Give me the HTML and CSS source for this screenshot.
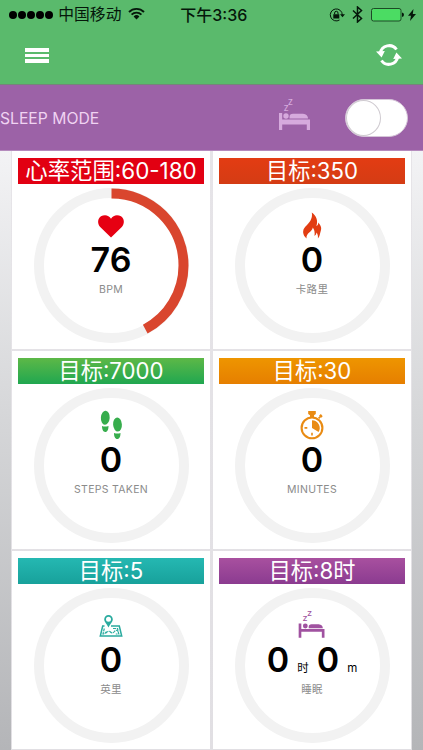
FILE: index.html
```html
<!DOCTYPE html>
<html lang="zh-CN">
<head>
<meta charset="utf-8">
<title>Activity</title>
<link rel="stylesheet" href="styles.css">
</head>
<body>
<header class="top">
  <div class="status">
    <div class="carrier">
      <span class="dots"><i></i><i></i><i></i><i></i><i></i></span>
      <span class="name">中国移动</span>
      <svg class="wifi" width="17" height="13" viewBox="0 0 17 13" fill="none" stroke="#05170a" stroke-width="1.900"><path d="M1 5a10.600 10.600 0 0 1 15 0M3.600 7.600a7 7 0 0 1 9.800 0"/><path d="M5.600 9.400a4.200 4.200 0 0 1 5.800 0L8.500 12.400z" fill="#05170a" stroke="none"/></svg>
    </div>
    <div class="clock">下午3:36</div>
    <div class="indicators">
      <svg width="16" height="14" viewBox="0 0 16 14"><path d="M13.300 7A6 6 0 1 0 10.500 12" fill="none" stroke="#05170a"/><path d="M11 6.300h5L13.500 9.300zM4.300 6.200h6v4.300h-6z" fill="#05170a"/><path d="M5.600 6.300V5a1.700 1.700 0 0 1 3.400 0v1.300" fill="none" stroke="#05170a"/></svg>
      <svg class="bt" width="11" height="17" viewBox="0 0 11 17" fill="none" stroke="#05170a" stroke-width="1.500"><path d="M1 4.500l8.500 8-4 3.500V1l4 3.500-8.500 8"/></svg>
      <svg class="battery" width="33" height="14" viewBox="0 0 33 14"><rect x=".5" y=".5" width="29.500" height="12.500" rx="2" fill="#4bdc63" stroke="#1c4a26"/><path d="M31 4.500q2 .5 2 2.300t-2 2.300z" fill="#05170a"/></svg>
      <svg class="bolt" width="8" height="12" viewBox="0 0 8 12"><path d="M5.500 0L0 6.700h3L2 12l6-7H4.800z" fill="#05170a"/></svg>
    </div>
  </div>
  <nav class="bar">
    <span class="menu"><i></i><i></i><i></i></span>
    <svg class="sync" width="26" height="22" viewBox="0 0 26 22"><g fill="none" stroke="#fff" stroke-width="3"><path d="M4.300 9A9 9 0 0 1 20.500 5.500"/><path d="M21.700 13A9 9 0 0 1 5.500 16.500"/></g><path d="M0 7.500l8.800-.5-3.200 6.500zM26 14.500l-8.800.5 3.200-6.500z" fill="#fff"/></svg>
  </nav>
</header>
<section class="mode">
  <span class="mode-label">SLEEP MODE</span>
  <svg class="mode-bed" width="32" height="32" viewBox="0 0 32 32"><text x="4.500" y="11.500" font-size="9.500">z</text><text x="8.700" y="6" font-size="9.500">z</text><path d="M0 14h3.200v6.500H31V31h-3.200v-5.500H3.200V31H0z"/><circle cx="7" cy="17" r="2.700"/><path d="M10.500 19.600v-1.600q0-3.200 3.500-3.200h10q5 .5 5 4.800z"/></svg>
  <span class="toggle"><i></i></span>
</section>
<main class="cards">
  <article class="card heart">
    <h2>心率范围:60-180</h2>
    <div class="dial">
      <svg class="ring" viewBox="0 0 155 155"><circle cx="77.500" cy="77.500" r="72.500"/><circle class="progress" cx="77.500" cy="77.500" r="72" pathLength="180" stroke-dasharray="76 180" transform="rotate(-90 77.500 77.500)"/></svg>
      <div class="reading">
        <svg class="icon" width="30" height="30" viewBox="0 0 30 30"><path d="M15 26.500L4.200 16C1.200 13 1.500 7.500 5 5.300 8.500 3.300 13 4 15 7.800 17 4 21.500 3.300 25 5.300c3.500 2.200 3.800 7.700.8 10.700z"/></svg>
        <div class="value">76</div>
        <div class="unit">BPM</div>
      </div>
    </div>
  </article>
  <article class="card flame">
    <h2>目标:350</h2>
    <div class="dial">
      <svg class="ring" viewBox="0 0 155 155"><circle cx="77.500" cy="77.500" r="72.500"/></svg>
      <div class="reading">
        <svg class="icon" width="30" height="30" viewBox="0 0 30 30"><path d="M9.500 27.500C5.500 24 5 19 8.500 15.500 12 12 16 8 14.800 1.500c4.500 3.500 6.500 8 4.600 13.500 1.300-.5 1.800-1.500 1.900-3.500 3.500 4 3.200 6.500 2.300 9-.8 2.300-.6 4.500-2.700 7 .3-2.500-.2-4.300-1.400-6-.3 1.800-.9 2.800-2 3.400.6-4-.2-6-1.700-8.400-.5 4.500-6.800 5-6.300 11z"/></svg>
        <div class="value">0</div>
        <div class="unit">卡路里</div>
      </div>
    </div>
  </article>
  <article class="card steps">
    <h2>目标:7000</h2>
    <div class="dial">
      <svg class="ring" viewBox="0 0 155 155"><circle cx="77.500" cy="77.500" r="72.500"/></svg>
      <div class="reading">
        <svg class="icon" width="30" height="30" viewBox="0 0 30 30"><ellipse cx="9.300" cy="6.700" rx="4.400" ry="7" transform="rotate(4 9.300 6.700)"/><path d="M6 15q3 1 6.500 0c0 3.500-1 6-3.200 6S6 18 6 15z"/><ellipse cx="21.500" cy="13.500" rx="4.400" ry="7" transform="rotate(-4 21.500 13.500)"/><path d="M18 22q3.500 1 6.500 0c0 3.500-1 6-3.200 6S18 25.500 18 22z"/></svg>
        <div class="value">0</div>
        <div class="unit">STEPS TAKEN</div>
      </div>
    </div>
  </article>
  <article class="card time">
    <h2>目标:30</h2>
    <div class="dial">
      <svg class="ring" viewBox="0 0 155 155"><circle cx="77.500" cy="77.500" r="72.500"/></svg>
      <div class="reading">
        <svg class="icon" width="30" height="30" viewBox="0 0 30 30"><g transform="translate(0 -.7)"><circle cx="15" cy="17.600" r="10.400" fill="none" stroke="currentColor" stroke-width="2.100"/><path d="M11.200.8h7.600v3L17 5v2.500h-4V5l-1.800-1.200zM15 17.800V10a7.800 7.800 0 0 1 6.600 11.800zM7.500 16.800h2.800v1.600H7.500zM14.200 22.500h1.600v2.600h-1.600zM21 7.500l1.600-1.600-.5-.8 1.800-1.300 1.800 2.200-1.500 1.500-.8-.3-1 1.500z"/></g></svg>
        <div class="value">0</div>
        <div class="unit">MINUTES</div>
      </div>
    </div>
  </article>
  <article class="card distance">
    <h2>目标:5</h2>
    <div class="dial">
      <svg class="ring" viewBox="0 0 155 155"><circle cx="77.500" cy="77.500" r="72.500"/></svg>
      <div class="reading">
        <svg class="icon" width="30" height="30" viewBox="0 0 30 30"><path d="M8.500 15H6.700L4.300 25h21.400l-2.400-10H15" fill="none" stroke="currentColor" stroke-width="1.500"/><path fill-rule="evenodd" d="M12.500 16.500C10.800 12.500 8.200 11 8.200 8.200a4.300 4.300 0 0 1 8.600 0c0 2.800-2.600 4.300-4.300 8.300zm0-10.800a2.500 2.500 0 1 0 0 5 2.500 2.500 0 0 0 0-5z"/><path d="M8.300 17.500L7 23h1.500l2-2.500M10 22q2.500-3 4.500-1t4-.5 3.500 0M17 17.500h4.500l1.300 5.500h-3" fill="none" stroke="currentColor" stroke-width="1.200" stroke-dasharray="3 .8"/></svg>
        <div class="value">0</div>
        <div class="unit">英里</div>
      </div>
    </div>
  </article>
  <article class="card sleep">
    <h2>目标:8时</h2>
    <div class="dial">
      <svg class="ring" viewBox="0 0 155 155"><circle cx="77.500" cy="77.500" r="72.500"/></svg>
      <div class="reading">
        <svg class="icon" width="30" height="30" viewBox="-2 -1 36 36"><text x="4.500" y="10.500" font-size="11">z</text><text x="10" y="5" font-size="11">z</text><path d="M0 14h3.200v6.500H31V31h-3.200v-7H3.200V31H0z"/><circle cx="8" cy="17" r="2.900"/><path d="M12 19.600v-1.600q0-3.200 3.500-3.200h8.500q5 .5 5 4.800z"/></svg>
        <div class="value duration"><span>0</span><small>时</small><span>0</span><small>m</small></div>
        <div class="unit">睡眠</div>
      </div>
    </div>
  </article>
</main>
</body>
</html>
```
FILE: styles.css
```css
* { box-sizing: border-box; }
body {
  margin: 0;
  height: 750px;
  overflow: hidden;
  font-family: Inter, "Noto Sans CJK SC", sans-serif;
  background: #fff;
}
.top {
  height: 85px;
  background: #5aba6c;
  border-bottom: 1px solid #75857a;
  color: #05170a;
}
.status {
  height: 28px;
  display: grid;
  grid-template-columns: 1fr auto 1fr;
  align-items: center;
  padding: 0 7px 0 8.500px;
}
.carrier, .indicators { display: flex; align-items: center; }
.dots { display: flex; gap: 1.200px; margin-right: 5px; }
.dots i { width: 8px; height: 8px; border-radius: 50%; background: #000; }
.name { font-size: 15.800px; line-height: 28px; padding-top: 1px; }
.wifi { margin-left: 7px; margin-top: -2px; }
.clock { font-size: 16px; font-weight: 500; line-height: 28px; padding-left: 3px; }
.indicators { justify-content: flex-end; }
.bt { margin: 0 8px 0 7px; }
.bolt { margin-left: 4px; }
.bar {
  height: 56px;
  display: flex;
  align-items: center;
  justify-content: space-between;
  padding: 0 21px 3px 25px;
}
.menu { display: grid; gap: 2px; width: 24px; margin-top: 2px; }
.menu i { height: 3.700px; background: #fff; }
.mode {
  height: 66px;
  display: flex;
  align-items: center;
  background: #9c62a7;
  border-bottom: 1px solid #b58bbd;
  padding-right: 15px;
}
.mode-label { flex: 1; font-size: 15.700px; color: #f0d3f2; padding-top: 1px; }
.mode-bed { color: #d6aadd; fill: currentColor; margin: -5px 34px 0 0; overflow: visible; }
.toggle {
  width: 63px;
  height: 38px;
  border-radius: 19px;
  background: #fff;
  border: 1px solid #d5c5d8;
}
.toggle i {
  display: block;
  width: 35px;
  height: 36px;
  border-radius: 50%;
  border: 1px solid #cfcad0;
}
.cards {
  height: 599px;
  overflow: hidden;
  display: grid;
  grid-template-columns: 198px 198px;
  grid-auto-rows: 198px;
  gap: 2px 3px;
  padding: 0 12px;
  background:
    linear-gradient(#e6e4e8, #e1dfe3) center / 401px 100% no-repeat,
    linear-gradient(#f3f3f5, #d5d6d8 45%, #b4b5b8);
}
.card {
  background: #fff;
  padding: 6.500px 6px 0;
}
h2 {
  margin: 0;
  height: 26.500px;
  font-size: 22.200px;
  line-height: 26px;
  font-weight: 400;
  text-align: center;
  color: #fff;
  white-space: nowrap;
}
.heart h2 { font-size: 22.400px; }
.dial { display: grid; width: 155px; height: 155px; margin: 4px 0 0 15.500px; }
.ring, .reading { grid-area: 1 / 1; }
.ring { width: 155px; height: 155px; fill: none; stroke: #f2f2f2; stroke-width: 10; }
.progress { stroke: #d9462e; }
.reading {
  display: flex;
  flex-direction: column;
  align-items: center;
  padding-top: 23px;
}
.icon { fill: currentColor; overflow: visible; }
.value {
  height: 38px;
  line-height: 38px;
  font-size: 34px;
  font-weight: 600;
  color: #000;
}
.unit {
  margin-top: 3px;
  font-size: 10.500px;
  line-height: 16px;
  letter-spacing: .3px;
  color: #8b8b8b;
}
.duration { display: flex; align-items: baseline; }
.duration small { font-size: 11.500px; font-weight: 400; margin: 0 8px; }
.duration small:last-child { margin: 0 0 0 8px; }
.heart h2 { background: #e20012; }
.heart .icon { color: #e60012; }
.flame h2 { background: linear-gradient(#e33c13, #d43c14); }
.flame .icon { color: #e23d12; }
.steps h2 { background: linear-gradient(#5db847, #20a750); }
.steps .icon { color: #37ad4d; }
.time h2 { background: linear-gradient(#ee9500, #e67f00); }
.time .icon { color: #e98b13; }
.distance h2 { background: linear-gradient(#25b8b2, #18a19b); }
.distance .icon { color: #2aab9f; }
.sleep h2 { background: linear-gradient(#a8509f, #8b3b90); }
.sleep .icon { color: #a052a0; }
```
